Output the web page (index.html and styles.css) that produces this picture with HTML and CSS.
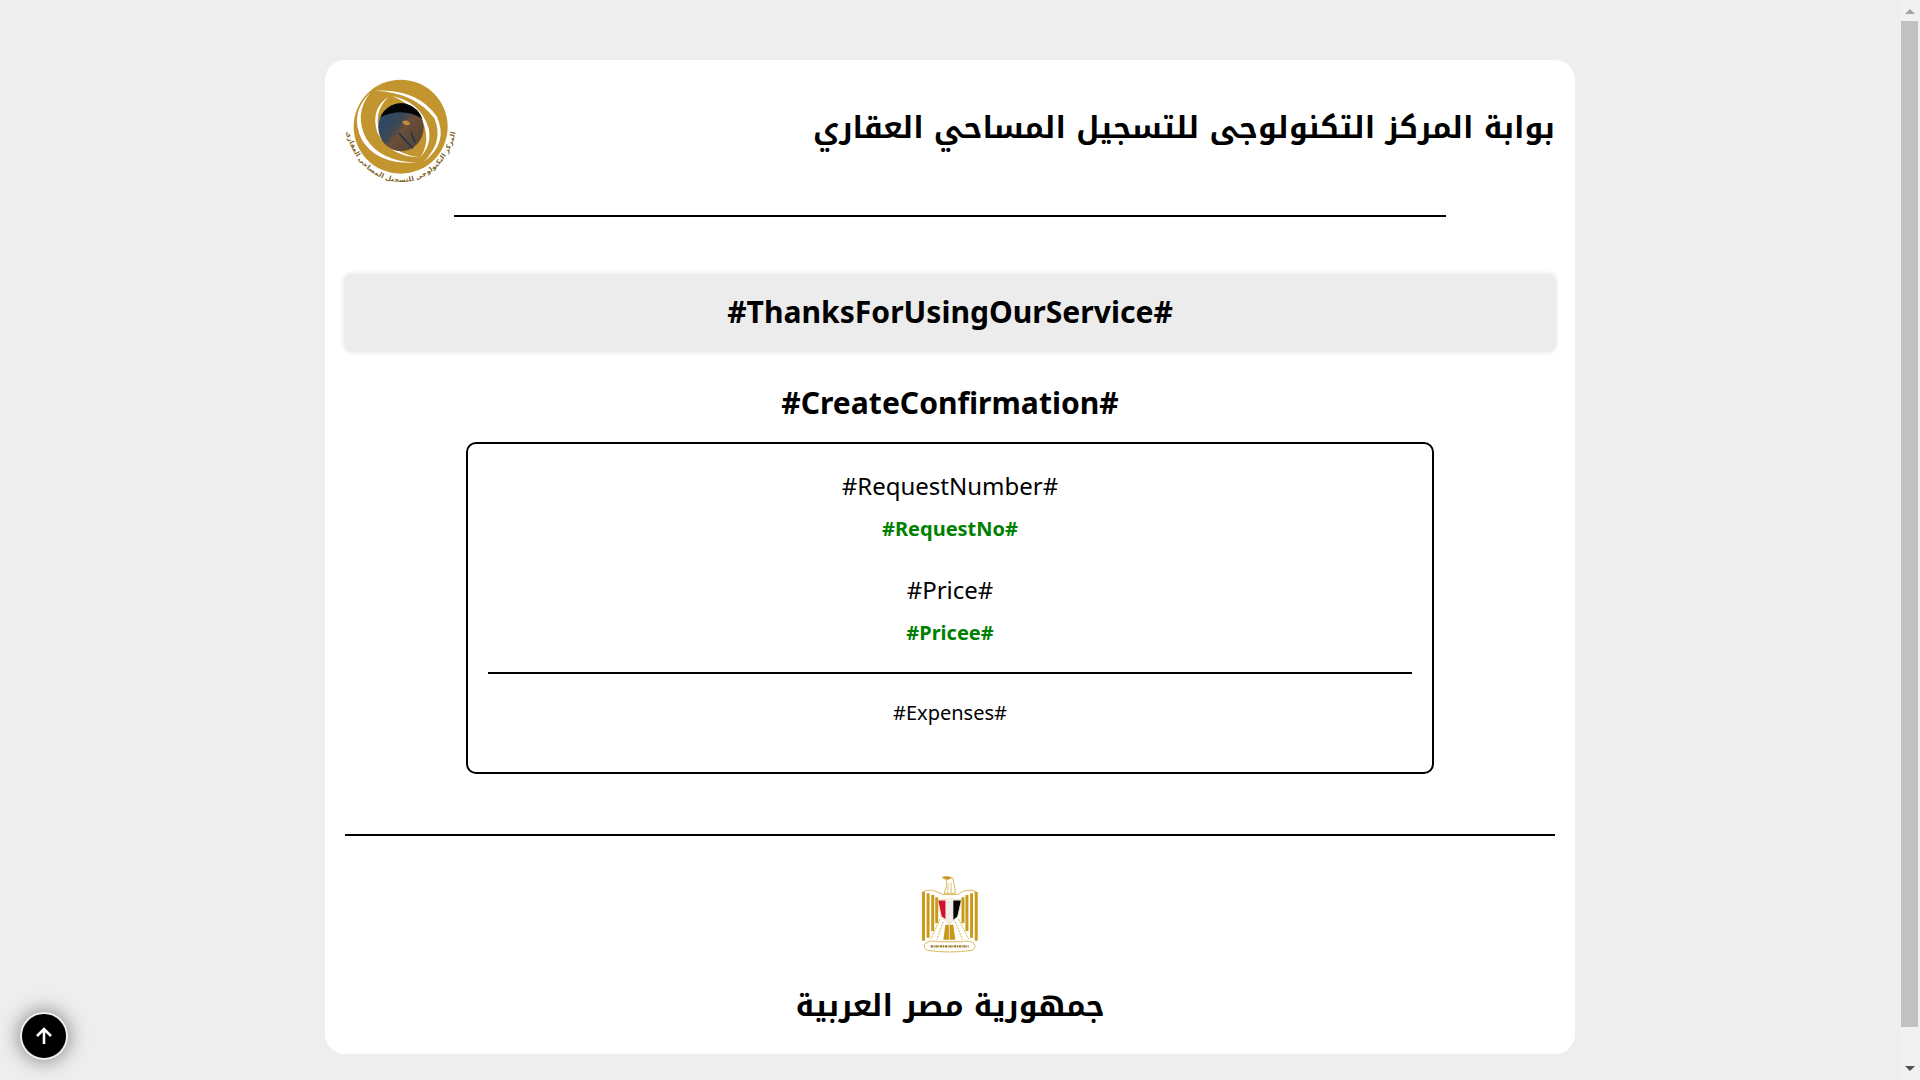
FILE: index.html
```html
<!DOCTYPE html>
<html lang="ar">
  <head>
    <meta charset="utf-8">
    <title>بوابة المركز التكنولوجى</title>
    <link rel="stylesheet" href="styles.css">
  </head>
  <body>
    <div class="card">
      <div class="header">
        <svg class="logo" viewBox="75 84 340 330" xmlns="http://www.w3.org/2000/svg">
          <defs>
            <linearGradient id="earth" x1="0.1" y1="0.2" x2="0.8" y2="0.8">
              <stop offset="0" stop-color="#27486b"/>
              <stop offset="0.45" stop-color="#3d4853"/>
              <stop offset="0.6" stop-color="#6a4e38"/>
              <stop offset="1" stop-color="#5c4636"/>
            </linearGradient>
            <path id="arc" d="M78 246 C100 350 180 398 250 396 C320 394 395 330 408 232"/>
          </defs>
          <circle cx="241" cy="230" r="141" fill="#c3952f"/>
          <path d="M150 128 Q85 190 125 270 Q170 345 290 338 Q180 335 137 265 Q100 190 150 128Z" fill="#fff"/>
          <path d="M165 122 Q290 115 350 200 Q385 280 310 335 Q372 275 342 205 Q285 128 165 122Z" fill="#fff"/>
          <path d="M205 140 Q150 175 170 245 Q205 320 300 322 Q215 312 178 245 Q158 185 205 140Z" fill="#fff"/>
          <path d="M215 138 Q300 155 325 235 Q335 285 300 322 Q328 280 312 228 Q285 165 215 138Z" fill="#fff"/>
          <ellipse cx="242" cy="232" rx="68" ry="72" fill="url(#earth)"/>
          <path d="M180 202 A68 72 0 0 1 305 205 Q245 170 180 202Z" fill="#040507"/>
          <path d="M236 250 L278 295 M272 248 L284 278" stroke="#1d3650" stroke-width="5" fill="none"/>
          <path d="M245 215 Q262 205 270 222 Q255 232 245 215Z" fill="#c08a3e"/>
          <text class="logo-text"><textPath href="#arc" textLength="480" lengthAdjust="spacing">المركز التكنولوجى للتسجيل المساحى العقارى</textPath></text>
        </svg>
        <h1 class="portal-title">بوابة المركز التكنولوجى للتسجيل المساحي العقاري</h1>
      </div>
      <hr class="rule rule-header">

      <div class="thanks">#ThanksForUsingOurService#</div>
      <h2 class="confirm-title">#CreateConfirmation#</h2>

      <div class="details">
        <div class="label">#RequestNumber#</div>
        <div class="value">#RequestNo#</div>
        <div class="label label-price">#Price#</div>
        <div class="value">#Pricee#</div>
        <hr class="rule rule-details">
        <div class="expenses">#Expenses#</div>
      </div>

      <hr class="rule rule-footer">

      <div class="footer">
        <svg class="emblem" viewBox="120 45 180 235" xmlns="http://www.w3.org/2000/svg">
          <!-- head and neck -->
          <path d="M186 52 Q204 46 218 54 Q224 75 226 100 L192 100 Q203 80 200 62 Q194 56 186 52Z" fill="#fff" stroke="#d2a93c" stroke-width="2.500"/>
          <path d="M186 52 Q204 46 216 54 L202 60Z" fill="#c89a1c"/>
          <path d="M205 70 L203 100 M213 68 L214 100" stroke="#d2a93c" stroke-width="2"/>
          <!-- wings -->
          <path d="M127 96 Q150 82 188 104 L232 104 Q262 82 290 96" fill="none" stroke="#d2a93c" stroke-width="2.500"/>
          <g stroke="#c89a1c" stroke-width="9" fill="none">
            <path d="M130 96 V243"/><path d="M144 100 V234"/><path d="M158 105 V214"/><path d="M170 112 V190"/>
            <path d="M289 96 V243"/><path d="M275 100 V234"/><path d="M261 105 V214"/><path d="M249 112 V190"/>
          </g>
          <!-- shield -->
          <path d="M175 122 H197 V178 L185 170Z" fill="#d2102f"/>
          <path d="M197 122 H220 V180 L208 190 L197 180Z" fill="#f1ede6"/>
          <path d="M220 122 H243 L232 170 L220 180Z" fill="#050505"/>
          <path d="M173 120 Q208 114 245 120 L233 172 L208 192 L183 172Z" fill="none" stroke="#d9bb62" stroke-width="1.500"/>
          <!-- legs and tail -->
          <path d="M180 178 L152 238 M190 186 L170 240 M236 178 L266 238 M226 186 L248 240" stroke="#d9b44a" stroke-width="3" stroke-dasharray="6 3"/>
          <path d="M196 195 H220 L226 240 H190Z" fill="#c89a1c"/>
          <path d="M208 195 V240" stroke="#fff" stroke-width="2"/>
          <!-- scroll -->
          <path d="M135 252 Q150 240 172 246 H246 Q268 240 283 252 Q290 264 276 272 Q208 282 142 272 Q128 264 135 252Z" fill="#fff" stroke="#d2a93c" stroke-width="2.500"/>
          <path d="M152 260 H266" stroke="#9a7a28" stroke-width="7" stroke-dasharray="7 2 3 2"/>
        </svg>
        <h2 class="country">جمهورية مصر العربية</h2>
      </div>
    </div>

    <div class="scrollbar">
      <div class="scroll-btn"><span class="arrow-up"></span></div>
      <div class="scroll-thumb"></div>
      <div class="scroll-btn scroll-btn-down"><span class="arrow-down"></span></div>
    </div>

    <button class="to-top">
      <svg viewBox="0 0 24 24" xmlns="http://www.w3.org/2000/svg">
        <path d="M12 20 V5 M5 12 L12 5 L19 12" fill="none" stroke="#fff" stroke-width="2.600"/>
      </svg>
    </button>
  </body>
</html>
```

FILE: styles.css
```css
body {
  margin: 0;
  padding: 60px 20px 60px 0;
  background: #eeeeee;
  color: #000;
  font-family: "Noto Sans", "DejaVu Sans", sans-serif;
}
.card {
  width: 1250px;
  height: 994px;
  margin: 0 auto;
  box-sizing: border-box;
  padding: 18px 20px 0;
  background: #fff;
  border-radius: 20px;
}
.header {
  display: flex;
  justify-content: space-between;
  align-items: flex-start;
  height: 109px;
}
.logo {
  width: 114px;
  height: 110px;
}
.logo-text {
  font-size: 20px;
  font-weight: 700;
  fill: #7d5f1a;
}
.portal-title {
  margin: 28px 0 0;
  font-family: "Noto Kufi Arabic", "DejaVu Sans", sans-serif;
  font-size: 30px;
  line-height: 44px;
  font-weight: 700;
  direction: rtl;
}
.rule {
  border: 0;
  background: #000;
  height: 2px;
  margin: 0;
}
.rule-header {
  width: 992px;
  margin: 28px auto 57px;
}
.thanks {
  height: 78px;
  line-height: 76px;
  margin: 0 -1px;
  text-align: center;
  font-size: 30.08px;
  font-weight: 700;
  background: #ececec;
  border-radius: 8px;
  box-shadow: 0 0 5px rgba(0, 0, 0, 0.12);
}
.confirm-title {
  margin: 28px 0 16px;
  line-height: 46px;
  text-align: center;
  font-size: 30.08px;
  font-weight: 700;
}
.details {
  width: 968px;
  height: 332px;
  margin: 0 auto;
  box-sizing: border-box;
  padding: 25px 20px 0;
  border: 2px solid #000;
  border-radius: 10px;
  text-align: center;
}
.label {
  font-size: 24px;
  line-height: 33px;
}
.label-price {
  margin-top: 31px;
}
.value {
  margin-top: 13px;
  font-size: 20px;
  line-height: 27px;
  font-weight: 700;
  color: #008000;
}
.rule-details {
  margin-top: 26px;
}
.expenses {
  margin-top: 25px;
  font-size: 20px;
  line-height: 27px;
}
.rule-footer {
  margin-top: 60px;
}
.footer {
  display: flex;
  flex-direction: column;
  align-items: center;
  padding-top: 39px;
}
.emblem {
  width: 60px;
  height: 78px;
}
.country {
  margin: 31px 0 0;
  font-family: "Noto Kufi Arabic", "DejaVu Sans", sans-serif;
  font-size: 30px;
  line-height: 44px;
  font-weight: 700;
  direction: rtl;
}
.scrollbar {
  position: fixed;
  top: 0;
  right: 0;
  bottom: 0;
  width: 20px;
  box-sizing: border-box;
  padding: 0 2px 0 1px;
  display: flex;
  flex-direction: column;
  align-items: center;
  background: #f1f1f1;
}
.scroll-btn {
  flex: none;
  height: 21px;
  display: flex;
  justify-content: center;
  padding-top: 9px;
  box-sizing: border-box;
}
.scroll-btn-down {
  margin-top: auto;
  padding-top: 7px;
}
.arrow-up,
.arrow-down {
  width: 0;
  height: 0;
  border-left: 5px solid transparent;
  border-right: 5px solid transparent;
}
.arrow-up {
  border-bottom: 5px solid #a3a3a3;
}
.arrow-down {
  border-top: 5px solid #505050;
}
.scroll-thumb {
  flex: none;
  width: 17px;
  height: 1006px;
  background: #c1c1c1;
}
.to-top {
  position: fixed;
  left: 20px;
  bottom: 20px;
  width: 48px;
  height: 48px;
  padding: 10px;
  background: #000;
  border: 2px solid #eee;
  border-radius: 50%;
  box-shadow: 0 0 20px rgba(0, 0, 0, 0.5);
}
.to-top svg {
  display: block;
  width: 100%;
  height: 100%;
}
```
